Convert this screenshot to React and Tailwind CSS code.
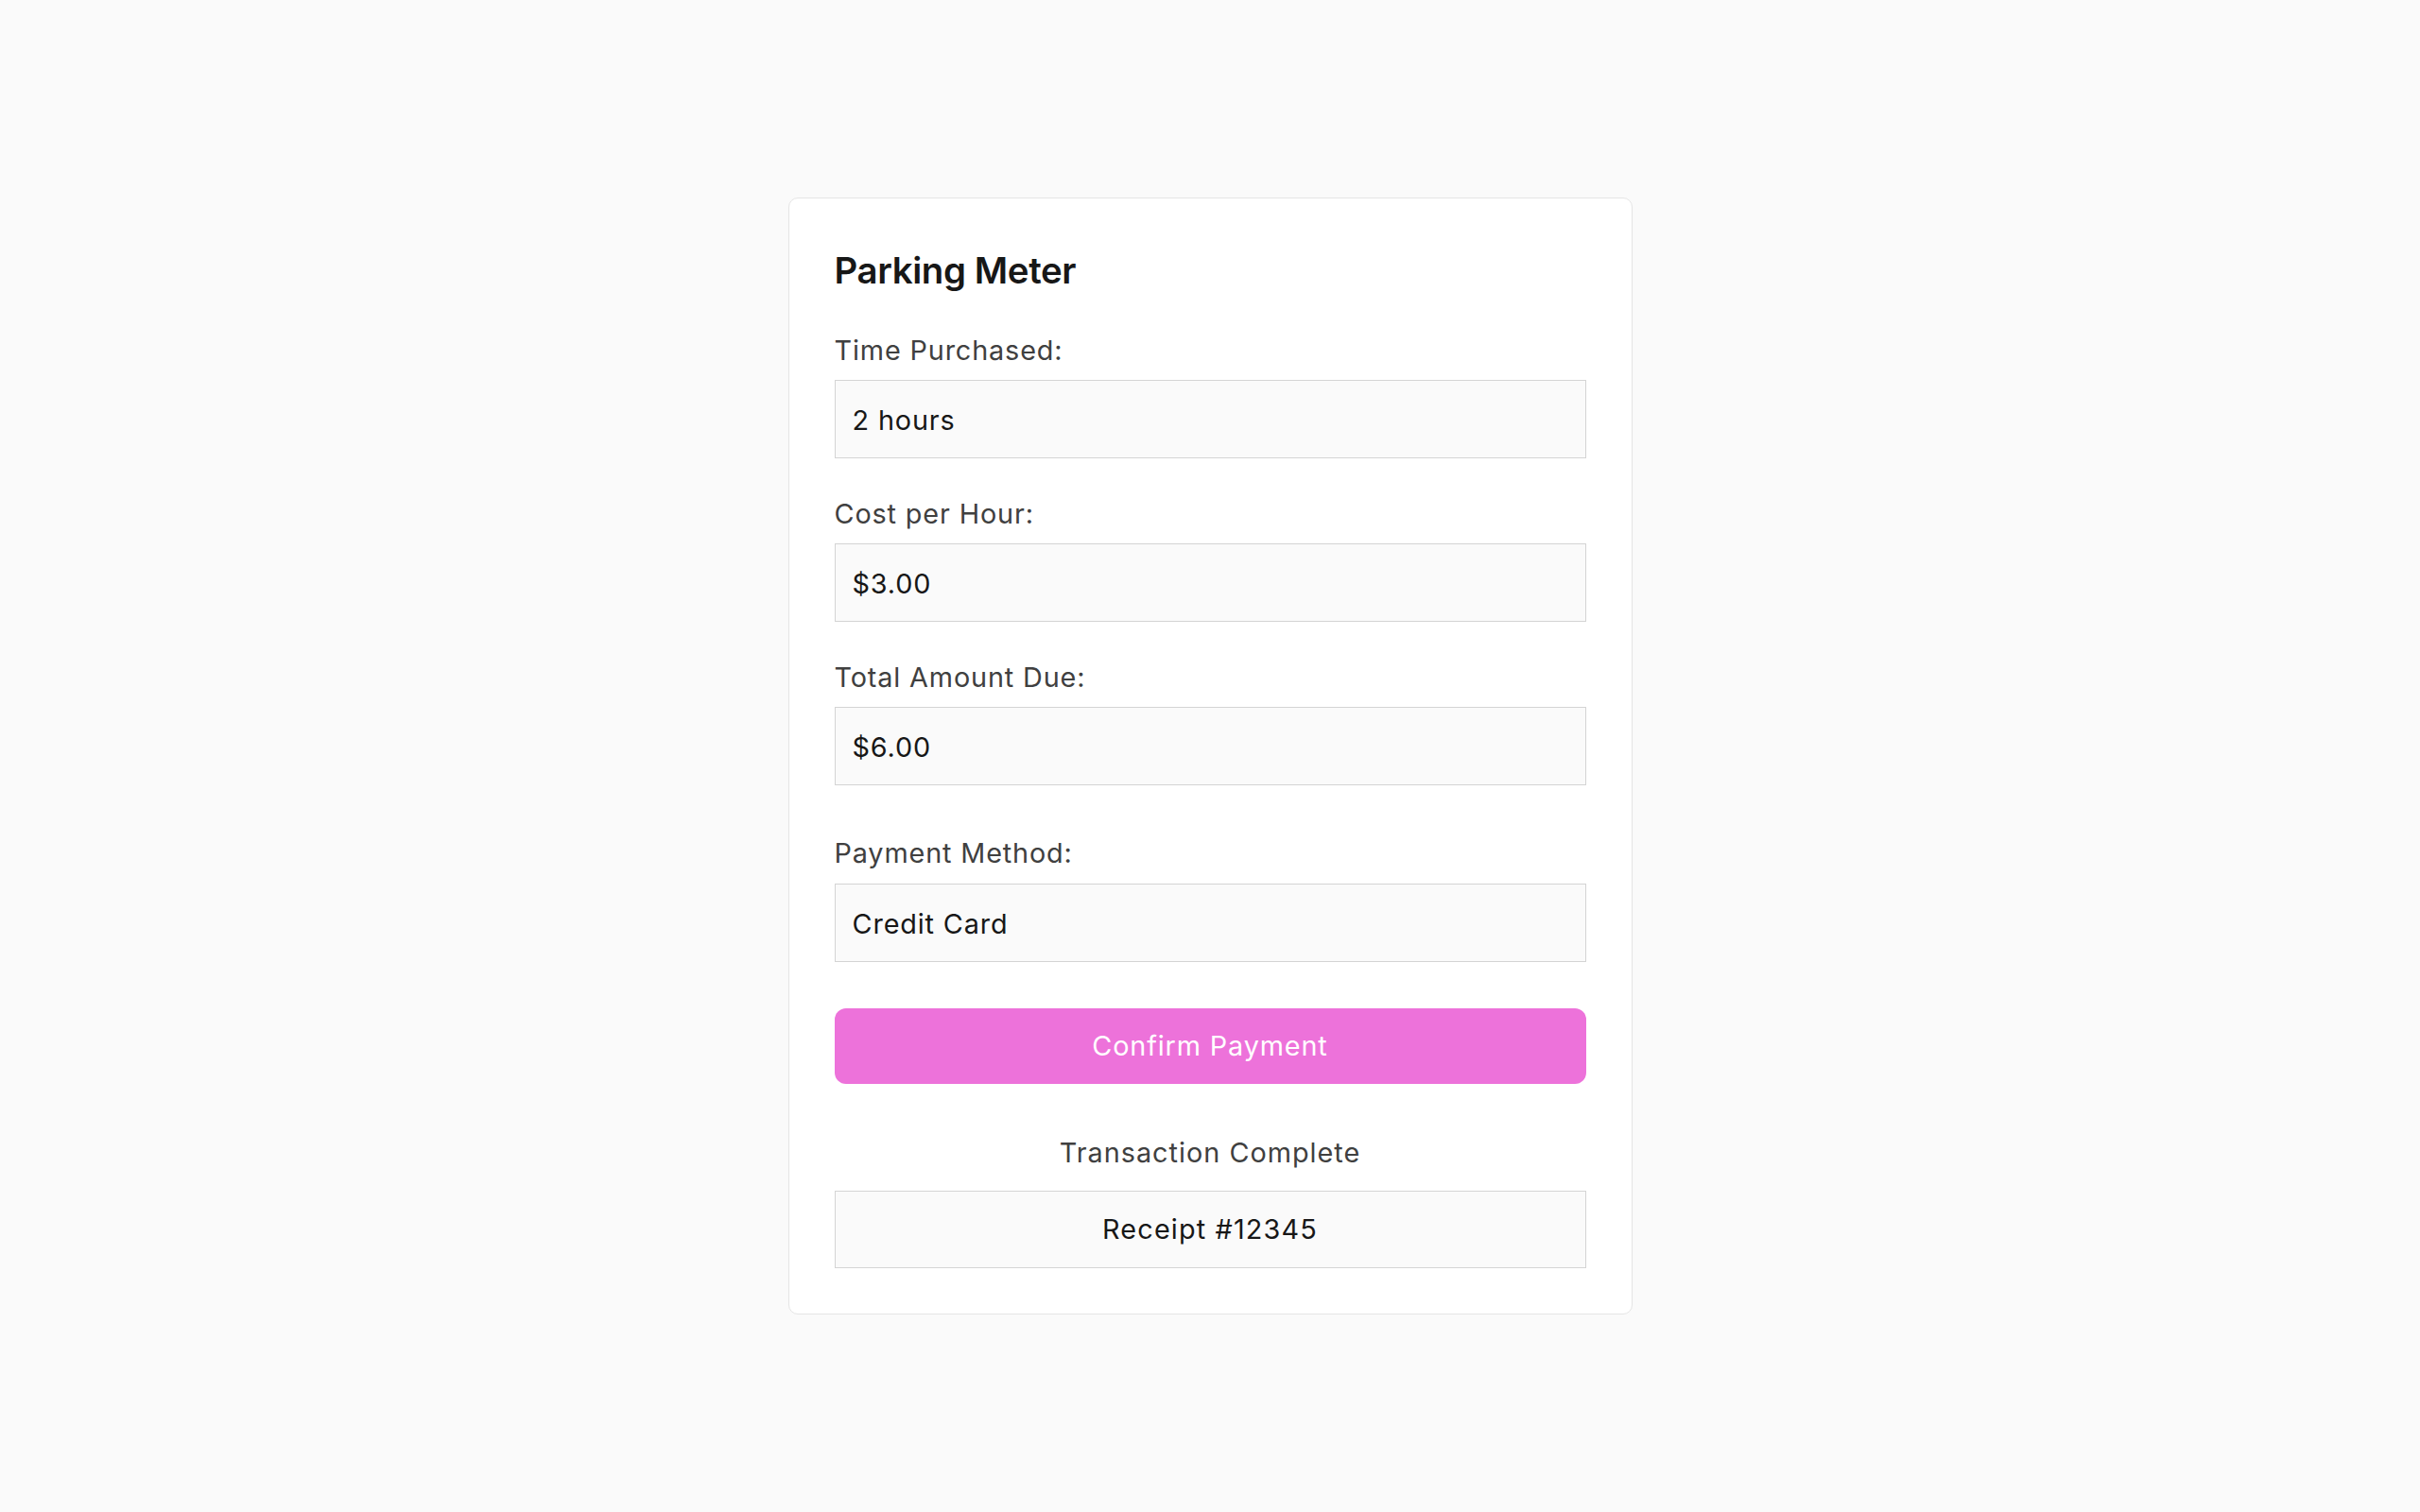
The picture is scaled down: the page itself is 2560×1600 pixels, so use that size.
const fields = [
  { label: 'Time Purchased:', value: '2 hours' },
  { label: 'Cost per Hour:', value: '$3.00' },
  { label: 'Total Amount Due:', value: '$6.00' },
]

function Field({ label, value }) {
  return (
    <div className="flex flex-col gap-[10px]">
      <label className="text-[28.8px] leading-[43.2px] tracking-[0.03em] text-[#404040]">{label}</label>
      <input
        readOnly
        value={value}
        className="h-[83px] w-full border-[1.5px] border-[#d4d4d4] bg-[#fafafa] px-[18px] pt-[2px] text-[28.8px] tracking-[0.03em] text-[#171717] outline-none"
      />
    </div>
  )
}

export default function App() {
  return (
    <div
      className="flex min-h-screen items-center justify-center bg-[#fafafa]"
      style={{ fontFamily: 'Inter, "Noto Sans", "Liberation Sans", sans-serif' }}
    >
      <div className="w-[893px] rounded-[10px] border-[1.5px] border-[#e5e5e5] bg-white p-[48px]">
        <h2 className="mb-[33px] text-[38.4px] leading-[57.6px] font-semibold tracking-[-0.01em] text-[#171717]">
          Parking Meter
        </h2>

        <div className="flex flex-col gap-[37px]">
          {fields.map((f) => (
            <Field key={f.label} label={f.label} value={f.value} />
          ))}
        </div>

        <div className="mt-[50px]">
          <Field label="Payment Method:" value="Credit Card" />
        </div>

        <button className="mt-[49px] flex h-[80px] w-full items-center justify-center rounded-[12px] bg-[#ed72da] text-[28.8px] tracking-[0.03em] text-white">
          Confirm Payment
        </button>

        <p className="mt-[51px] text-center text-[28.8px] leading-[43.2px] tracking-[0.035em] text-[#404040]">
          Transaction Complete
        </p>

        <div className="mt-[19px] flex h-[82px] items-center justify-center border-[1.5px] border-[#d4d4d4] bg-[#fafafa] text-[28.8px] tracking-[0.04em] text-[#171717]">
          Receipt #12345
        </div>
      </div>
    </div>
  )
}
